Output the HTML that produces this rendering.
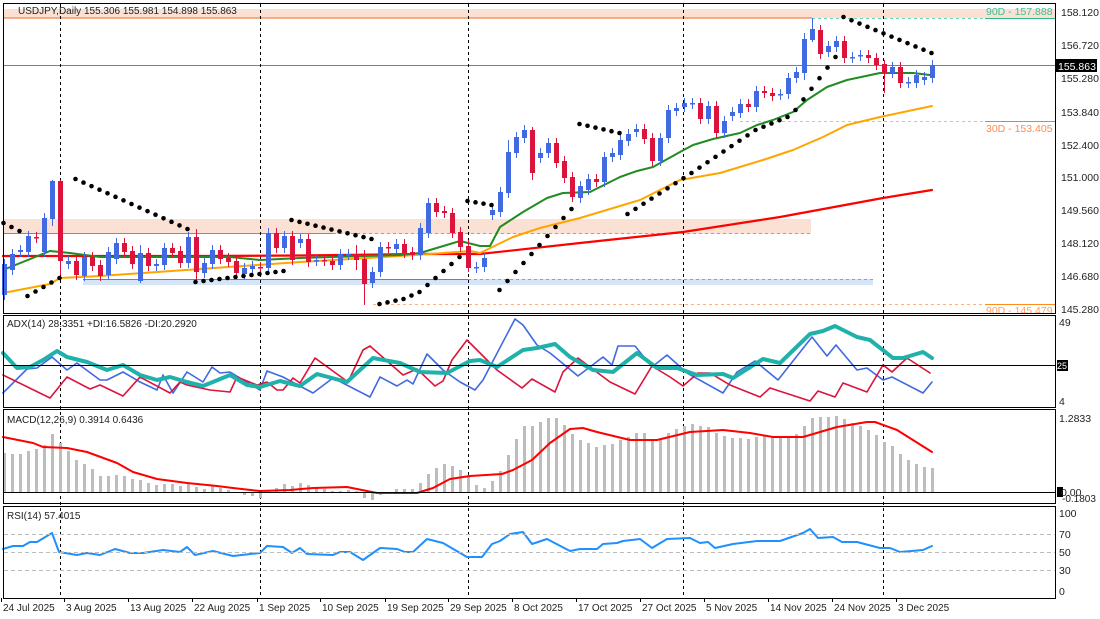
<!DOCTYPE html>
<html><head><meta charset="utf-8"><style>
html,body{margin:0;padding:0;background:#fff;width:1100px;height:619px;overflow:hidden}
svg{display:block;font-family:"Liberation Sans","DejaVu Sans",sans-serif}
</style></head><body>
<svg id="s" width="1100" height="619" viewBox="0 0 1100 619" xmlns="http://www.w3.org/2000/svg">
<rect width="1100" height="619" fill="#fff"/>
<!-- main zones -->
<rect x="3" y="9" width="1052" height="9" fill="#fbe0d4"/>
<line x1="3" y1="18" x2="812" y2="18" stroke="#f26b21" stroke-width="1"/>
<line x1="812" y1="18.5" x2="985" y2="18.5" stroke="#6ad6b4" stroke-dasharray="3,3"/>
<line x1="985" y1="18.5" x2="1055" y2="18.5" stroke="#2cb88a"/>
<text x="986" y="15" font-size="10.5" fill="#3cc096">90D - 157.888</text>
<rect x="3" y="219" width="808" height="15" fill="#fbe0d4"/>
<line x1="3" y1="233.5" x2="333" y2="233.5" stroke="#f26b21"/>
<line x1="333" y1="233.5" x2="811" y2="233.5" stroke="#f08a4b" stroke-dasharray="3,3"/>
<rect x="83" y="279" width="790" height="6" fill="#d3e5f7"/>
<line x1="83" y1="279.5" x2="468" y2="279.5" stroke="#3a8ee0"/>
<line x1="468" y1="279.5" x2="873" y2="279.5" stroke="#6aa8e8" stroke-dasharray="3,3"/>
<line x1="373" y1="304.5" x2="985" y2="304.5" stroke="#ffb27a" stroke-dasharray="3,3"/>
<line x1="985" y1="304.5" x2="1055" y2="304.5" stroke="#ff8c1a"/>
<text x="986" y="314" font-size="10.5" fill="#ffa060">90D - 145.479</text>
<line x1="740" y1="121.5" x2="985" y2="121.5" stroke="#ffb27a" stroke-dasharray="3,3"/>
<line x1="985" y1="121.5" x2="1055" y2="121.5" stroke="#ff7a1a"/>
<text x="986" y="132" font-size="10.5" fill="#ff8c4a">30D - 153.405</text>
<line x1="3" y1="65.5" x2="1055" y2="65.5" stroke="#778088"/>
<g id="vl" stroke="#000" stroke-dasharray="3,3"></g>
<g id="ind"></g>
<g id="cand"></g>
<g id="dots" fill="#000"></g>
<!-- frames -->
<g fill="none" stroke="#000">
<rect x="3.5" y="3.5" width="1052" height="310"/>
<rect x="3.5" y="315.5" width="1052" height="92"/>
<rect x="3.5" y="409.5" width="1052" height="94"/>
<rect x="3.5" y="506.5" width="1052" height="92"/>
<line x1="3" y1="365.5" x2="1055" y2="365.5"/>
<line x1="3" y1="492.5" x2="1055" y2="492.5"/>
</g>
<g stroke="#bbb" stroke-dasharray="4,3">
<line x1="4" y1="534.5" x2="1055" y2="534.5"/>
<line x1="4" y1="552.5" x2="1055" y2="552.5"/>
<line x1="4" y1="570.5" x2="1055" y2="570.5"/>
</g>
<text x="18" y="14" font-size="10" fill="#222">USDJPY,Daily  155.306 155.981 154.898 155.863</text>
<text x="7" y="327" font-size="10" fill="#222">ADX(14) 28.3351 +DI:16.5826 -DI:20.2920</text>
<text x="7" y="423" font-size="10" fill="#222">MACD(12,26,9) 0.3914 0.6436</text>
<text x="7" y="519" font-size="10" fill="#222">RSI(14) 57.4015</text>
<g font-size="10.5" fill="#222">
<text x="1061" y="16">158.120</text><text x="1061" y="49">156.720</text>
<rect x="1056" y="59" width="41" height="13" fill="#000"/><text x="1058" y="70" fill="#fff">155.863</text>
<text x="1061" y="82">155.280</text><text x="1061" y="116">153.840</text><text x="1061" y="149">152.400</text>
<text x="1061" y="181">151.000</text><text x="1061" y="214">149.560</text><text x="1061" y="247">148.120</text>
<text x="1061" y="280">146.680</text><text x="1061" y="313">145.280</text>
<text x="1059" y="326">49</text>
<rect x="1057" y="360" width="11" height="11" fill="#000"/><text x="1057" y="369" fill="#fff" font-size="9">25</text>
<text x="1059" y="405">4</text>
<text x="1059" y="422">1.2833</text>
<rect x="1057" y="487" width="6" height="10" fill="#000"/>
<text x="1061" y="496">0.00</text><text x="1062" y="502" font-size="10">-0.1803</text>
<text x="1059" y="517">100</text><text x="1059" y="538">70</text><text x="1059" y="556">50</text>
<text x="1059" y="574">30</text><text x="1059" y="595">0</text>
</g>
<g font-size="10" fill="#222" id="dates"></g>
</svg>
<script>
var NS="http://www.w3.org/2000/svg";
function el(p,t,a){var e=document.createElementNS(NS,t);for(var k in a)e.setAttribute(k,a[k]);p.appendChild(e);return e;}
var S=document.getElementById('s');
var vl=document.getElementById('vl');
[60,260,468,683,883].forEach(function(x){el(vl,'line',{x1:x+.5,y1:4,x2:x+.5,y2:598});});
var D=[["24 Jul 2025",3],["3 Aug 2025",66],["13 Aug 2025",130],["22 Aug 2025",194],["1 Sep 2025",259],["10 Sep 2025",322],["19 Sep 2025",387],["29 Sep 2025",450],["8 Oct 2025",514],["17 Oct 2025",578],["27 Oct 2025",642],["5 Nov 2025",706],["14 Nov 2025",770],["24 Nov 2025",834],["3 Dec 2025",898]];
var dg=document.getElementById('dates');
D.forEach(function(d){var t=el(dg,'text',{x:d[1],y:611});t.textContent=d[0];el(dg,'line',{x1:d[1]-1.5,y1:598,x2:d[1]-1.5,y2:602,stroke:'#000'});});
var ind=document.getElementById('ind');
function X(i){return 4+8*i;}
// MACD histogram
var H=[453,454,454,451,449,445,434,443,451,460,464,469,476,476,475,476,479,480,483,485,484,484,486,483,487,489,486,488,490,493,495,496,498,490,488,484,486,483,485,488,489,491,491,490,491,498,500,495,493,489,489,489,483,474,468,464,466,470,477,485,
488,481,471,455,439,426,426,422,418,418,425,434,440,443,447,445,444,440,437,433,433,440,440,433,429,426,424,426,427,433,436,438,438,439,437,435,437,437,438,434,426,418,417,417,416,419,423,426,430,435,442,446,454,460,464,467,468];
H.forEach(function(v,i){var y0=Math.min(v,492),y1=Math.max(v,492);el(ind,'rect',{x:X(i)-1,y:y0,width:3,height:Math.max(1,y1-y0),fill:'#bdbdbd'});});
function pl(pts,c,w){el(ind,'polyline',{points:pts.map(function(p){return p[0]+','+p[1]}).join(' '),fill:'none',stroke:c,'stroke-width':w,'stroke-linejoin':'round','stroke-linecap':'round'});}
// ADX
pl([[3,393],[27,369],[37,368],[52,357],[67,370],[77,363],[100,380],[107,380],[123,372],[140,382],[157,390],[163,375],[173,393],[187,372],[203,382],[212,367],[220,373],[230,372],[260,390],[267,371],[283,377],[313,393],[333,378],[370,397],[380,377],[397,386],[407,380],[413,384],[427,354],[443,370],[460,382],[475,390],[483,380],[515,319],[523,325],[537,345],[550,353],[578,376],[603,357],[612,365],[618,346],[635,346],[652,367],[667,355],[687,373],[723,393],[737,372],[755,361],[778,380],[812,337],[827,356],[836,345],[857,370],[867,368],[883,380],[892,377],[923,393],[932,382]],'#4169e1',1.6);
pl([[3,375],[50,398],[67,377],[90,389],[100,385],[123,396],[140,377],[170,393],[180,382],[187,385],[210,390],[230,392],[237,377],[257,385],[267,382],[277,390],[283,390],[293,378],[300,383],[315,358],[348,382],[363,350],[370,346],[403,375],[417,369],[435,386],[443,381],[452,360],[467,340],[497,370],[522,388],[532,379],[555,392],[563,372],[578,358],[610,382],[635,394],[652,366],[670,377],[683,386],[698,373],[710,373],[730,385],[760,397],[770,388],[810,401],[818,391],[835,397],[843,383],[867,392],[883,365],[892,372],[907,358],[930,373]],'#dc143c',1.6);
pl([[3,353],[17,368],[30,367],[43,360],[57,351],[67,357],[87,362],[107,370],[123,365],[140,375],[157,380],[170,377],[187,382],[203,386],[230,375],[247,385],[260,387],[280,381],[300,386],[317,374],[347,382],[373,358],[400,363],[420,372],[447,373],[470,361],[480,360],[497,367],[523,350],[537,348],[555,344],[570,357],[593,370],[613,372],[637,353],[657,368],[677,368],[697,375],[723,374],[733,378],[763,359],[780,363],[810,334],[823,331],[835,326],[857,337],[870,340],[893,358],[903,358],[923,352],[932,358]],'#20b2aa',4);
// MACD signal
pl([[3,437],[33,443],[43,447],[67,448],[87,452],[117,463],[133,472],[157,479],[187,483],[217,486],[233,488],[260,491],[290,490],[313,488],[347,487],[377,493],[417,493],[433,488],[450,479],[470,476],[502,474],[513,470],[532,460],[550,443],[570,429],[583,428],[597,432],[630,440],[657,440],[690,432],[723,430],[750,433],[773,437],[803,437],[837,427],[867,422],[875,422],[897,430],[932,452]],'#ff0000',2);
// RSI
pl([[3,549],[13,546],[23,546],[30,542],[37,542],[52,533],[59,552],[77,555],[87,553],[100,555],[115,549],[130,553],[143,553],[163,550],[180,552],[187,547],[195,555],[213,551],[233,556],[260,553],[267,546],[283,547],[292,553],[300,548],[307,554],[333,555],[340,552],[350,552],[363,560],[380,548],[397,549],[405,552],[413,552],[427,539],[443,543],[467,557],[482,557],[492,544],[500,541],[510,534],[523,532],[532,544],[547,539],[570,551],[580,549],[597,549],[603,544],[617,543],[623,541],[640,539],[652,548],[667,539],[690,538],[700,543],[708,542],[715,548],[733,544],[757,541],[780,541],[803,533],[810,529],[818,538],[833,537],[842,542],[857,542],[880,548],[890,548],[900,552],[923,550],[932,546]],'#1e90ff',2);
// MAs
pl([[3,256],[100,256],[200,256],[300,255.5],[420,254],[480,254],[580,243],[683,232],[780,217],[883,198],[932,190]],'#ff0000',2.2);
pl([[3,293],[50,284],[60,278],[100,276],[200,269],[300,262],[400,256],[430,254],[470,251],[480,253],[513,237],[540,228],[580,218],[640,200],[680,180],[720,173],[763,160],[793,150],[823,137],[847,125],[880,117],[913,110],[932,106]],'#ffa500',2);
pl([[3,270],[50,251],[70,253],[100,257],[230,257],[260,260],[300,258],[400,255],[420,253],[460,241],[480,246],[490,246],[500,227],[523,212],[547,198],[563,193],[590,192],[620,177],[637,171],[653,167],[680,152],[693,145],[713,139],[740,133],[757,125],[773,120],[793,112],[807,100],[827,87],[847,80],[880,73],[913,73],[930,75]],'#228b22',2);
// candles
var C=[[264,295,1],[254,270,1],[250,252,1],[236,252,1],[237,238,0],[218,252,1],[181,219,1],[181,261,0],[261,264,1],[261,275,0],[257,276,1],[257,266,0],[265,276,0],[252,275,1],[243,259,1],[243,252,0],[251,264,0],[253,281,1],[253,266,0],[264,266,1],[248,265,1],[248,253,0],[251,263,0],[237,263,1],[237,272,0],[263,273,1],[250,264,1],[250,259,0],[258,262,0],[261,273,0],[268,274,1],[266,269,1],[267,268,0],[233,268,1],[233,248,0],[236,248,1],[236,260,0],[239,243,1],[239,262,0],[260,261,1],[260,261,0],[261,265,0],[254,265,1],[254,255,1],[254,260,0],[259,284,0],[272,283,1],[247,272,1],[247,248,0],[244,249,1],[244,253,0],[252,255,0],[228,255,1],[203,233,1],[203,212,0],[211,213,0],[213,233,0],[232,247,0],[246,268,0],[267,268,1],[258,267,1],[210,215,1],[192,212,1],[152,193,1],[137,153,1],[130,138,1],[130,173,0],[153,158,1],[143,153,1],[143,163,0],[161,178,0],[177,197,0],[186,198,1],[179,190,1],[179,182,0],[157,182,1],[153,157,1],[140,155,1],[134,141,1],[129,132,1],[129,139,0],[138,161,0],[138,161,1],[110,138,1],[108,111,1],[103,107,1],[103,104,1],[103,119,0],[106,119,1],[106,133,0],[121,133,1],[112,116,1],[104,113,1],[104,107,0],[91,107,1],[91,93,0],[93,96,0],[94,95,1],[78,94,1],[72,78,1],[39,73,1],[29,40,1],[30,54,0],[46,52,1],[41,47,1],[41,58,0],[57,58,1],[55,56,1],[55,58,0],[58,65,0],[64,73,0],[67,73,1],[67,83,0],[82,83,1],[75,83,1],[77,80,1],[65,78,1]];
var W={6:[180,226],7:[180,275],45:[250,305],100:[33,80],101:[18,42],110:[60,93],17:[245,283],24:[229,280],66:[127,180],63:[140,198],44:[245,270],58:[240,272]};
var cg=document.getElementById('cand');
C.forEach(function(c,i){var x=X(i),col=c[2]?'#4169e1':'#dc143c';var hi=c[0]-5,lo=c[1]+5;if(W[i]){hi=W[i][0];lo=W[i][1];}
el(cg,'line',{x1:x+.5,y1:hi,x2:x+.5,y2:lo,stroke:col,'stroke-width':1});
el(cg,'rect',{x:x-2,y:c[0],width:5,height:Math.max(1.5,c[1]-c[0]),fill:col});});
// SAR dots
var dg2=document.getElementById('dots');
function seg(pts){for(var k=0;k<pts.length-1;k++){var a=pts[k],b=pts[k+1];for(var x=a[0];x<b[0]||(k==pts.length-2&&x<=b[0]);x+=8){var y=a[1]+(b[1]-a[1])*(x-a[0])/(b[0]-a[0]);el(dg2,'circle',{cx:x+.5,cy:y,r:2.3});}}}
seg([[3,223],[19,231]]);seg([[27,296],[59,278]]);seg([[75,179],[187,229]]);seg([[195,282],[283,271]]);
seg([[291,220],[371,239]]);seg([[379,304],[403,299],[419,292],[435,278],[459,257]]);seg([[467,201],[491,205]]);
seg([[499,290],[523,263],[571,209]]);seg([[579,124],[619,133]]);
seg([[627,214],[691,173],[755,130],[787,117],[795,110],[835,57]]);seg([[843,17],[931,53]]);
</script>
</body></html>
